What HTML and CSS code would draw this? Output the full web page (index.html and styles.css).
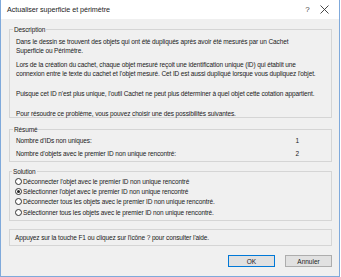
FILE: index.html
```html
<!DOCTYPE html>
<html lang="fr">
<head>
    <meta charset="UTF-8">
    <title>Actualiser superficie et périmètre</title>
    <link rel="stylesheet" href="styles.css">
</head>
<body>

<div class="window">
    <div class="titlebar">
        <span class="title">Actualiser superficie et périmètre</span>
        <span class="title-btn help">?</span>
        <span class="title-btn close">
            <svg width="9" height="9" viewBox="0 0 9 9"><path d="M0.5 0.5 L8.5 8.5 M8.5 0.5 L0.5 8.5" stroke="#333" stroke-width="0.9" fill="none"/></svg>
        </span>
    </div>

    <div class="content">
        <fieldset class="group description">
            <legend>Description</legend>
            <p class="p1">Dans le dessin se trouvent des objets qui ont été dupliqués après avoir été mesurés par un Cachet<br>Superficie ou Périmètre.</p>
            <p class="p2">Lors de la création du cachet, chaque objet mesuré reçoit une identification unique (ID) qui établit une<br>connexion entre le texte du cachet et l'objet mesuré. Cet ID est aussi dupliqué lorsque vous dupliquez l'objet.</p>
            <p class="p3">Puisque cet ID n'est plus unique, l'outil Cachet ne peut plus déterminer à quel objet cette cotation appartient.</p>
            <p class="p4">Pour résoudre ce problème, vous pouvez choisir une des possibilités suivantes.</p>
        </fieldset>

        <fieldset class="group summary">
            <legend>Résumé</legend>
            <div class="row"><span>Nombre d'IDs non uniques:</span><span class="num">1</span></div>
            <div class="row"><span>Nombre d'objets avec le premier ID non unique rencontré:</span><span class="num">2</span></div>
        </fieldset>

        <fieldset class="group solution">
            <legend>Solution</legend>
            <label class="radio"><span class="dot"></span>Déconnecter l'objet avec le premier ID non unique rencontré</label>
            <label class="radio checked"><span class="dot"></span>Sélectionner l'objet avec le premier ID non unique rencontré</label>
            <label class="radio"><span class="dot"></span>Déconnecter tous les objets avec le premier ID non unique rencontré.</label>
            <label class="radio"><span class="dot"></span>Sélectionner tous les objets avec le premier ID non unique rencontré.</label>
        </fieldset>

        <div class="hint">Appuyez sur la touche F1 ou cliquez sur l'icône ? pour consulter l'aide.</div>

        <div class="buttons">
            <button class="btn default">OK</button>
            <button class="btn">Annuler</button>
        </div>
    </div>
</div>

</body>
</html>
```

FILE: styles.css
```css
body {
    margin: 0;
    padding: 0;
    background-color: #fff;
    font-family: 'Liberation Sans', Arial, sans-serif;
    font-size: 6.5px;
    letter-spacing: -0.12px;
    color: #1a1a1a;
}

.window {
    width: 340px;
    height: 277px;
    box-sizing: border-box;
    border: 1px solid #7fa9db;
    border-top: none;
    background-color: #f0f0f0;
}

.titlebar {
    height: 19px;
    background-color: #fff;
    display: flex;
    align-items: center;
    padding-left: 6px;
}

.title {
    flex: 1;
    font-size: 7.2px;
    letter-spacing: -0.05px;
    color: #222;
}

.title-btn {
    width: 15px;
    text-align: center;
    font-size: 8px;
    color: #444;
}

.help {
    margin-right: 2px;
}

.close {
    margin-right: 7px;
    display: flex;
    justify-content: center;
}

.content {
    padding: 6px 7px 0 8px;
}

.group {
    margin: 0;
    border: 1px solid #d5d5d5;
    padding: 0 6px 0 6px;
}

.group legend {
    padding: 0 1px;
    margin-left: -3px;
    line-height: 9px;
}

.group p {
    margin: 0;
    line-height: 9px;
    white-space: nowrap;
}

.description {
    height: 88px;
    padding-top: 3px;
}

.description .p2 {
    margin-top: 5px;
}

.description .p3 {
    margin-top: 11px;
}

.description .p4 {
    margin-top: 11px;
}

.summary {
    margin-top: 7px;
    padding-top: 0;
    padding-bottom: 1px;
}

.row {
    display: flex;
    justify-content: space-between;
    line-height: 13px;
    padding-right: 26px;
}

.solution {
    margin-top: 5px;
    padding: 0 6px 3px 5px;
}

.radio {
    display: flex;
    align-items: center;
    height: 10.3px;
}

.dot {
    width: 7px;
    height: 7px;
    border: 1px solid #333;
    border-radius: 50%;
    background-color: #fff;
    margin-right: 1px;
    box-sizing: border-box;
    position: relative;
}

.checked .dot::after {
    content: "";
    position: absolute;
    left: 1px;
    top: 1px;
    width: 3px;
    height: 3px;
    border-radius: 50%;
    background-color: #222;
}

.hint {
    margin-top: 8px;
    border: 1px solid #d5d5d5;
    height: 15px;
    line-height: 15px;
    padding-left: 5px;
}

.buttons {
    display: flex;
    justify-content: flex-end;
    gap: 10px;
    margin-top: 9px;
}

.btn {
    width: 47px;
    height: 12px;
    padding: 0;
    font-family: 'Liberation Sans', Arial, sans-serif;
    font-size: 6.5px;
    color: #1a1a1a;
    background-color: #e1e1e1;
    border: 1px solid #adadad;
}

.btn.default {
    border-color: #0078d7;
}
```
